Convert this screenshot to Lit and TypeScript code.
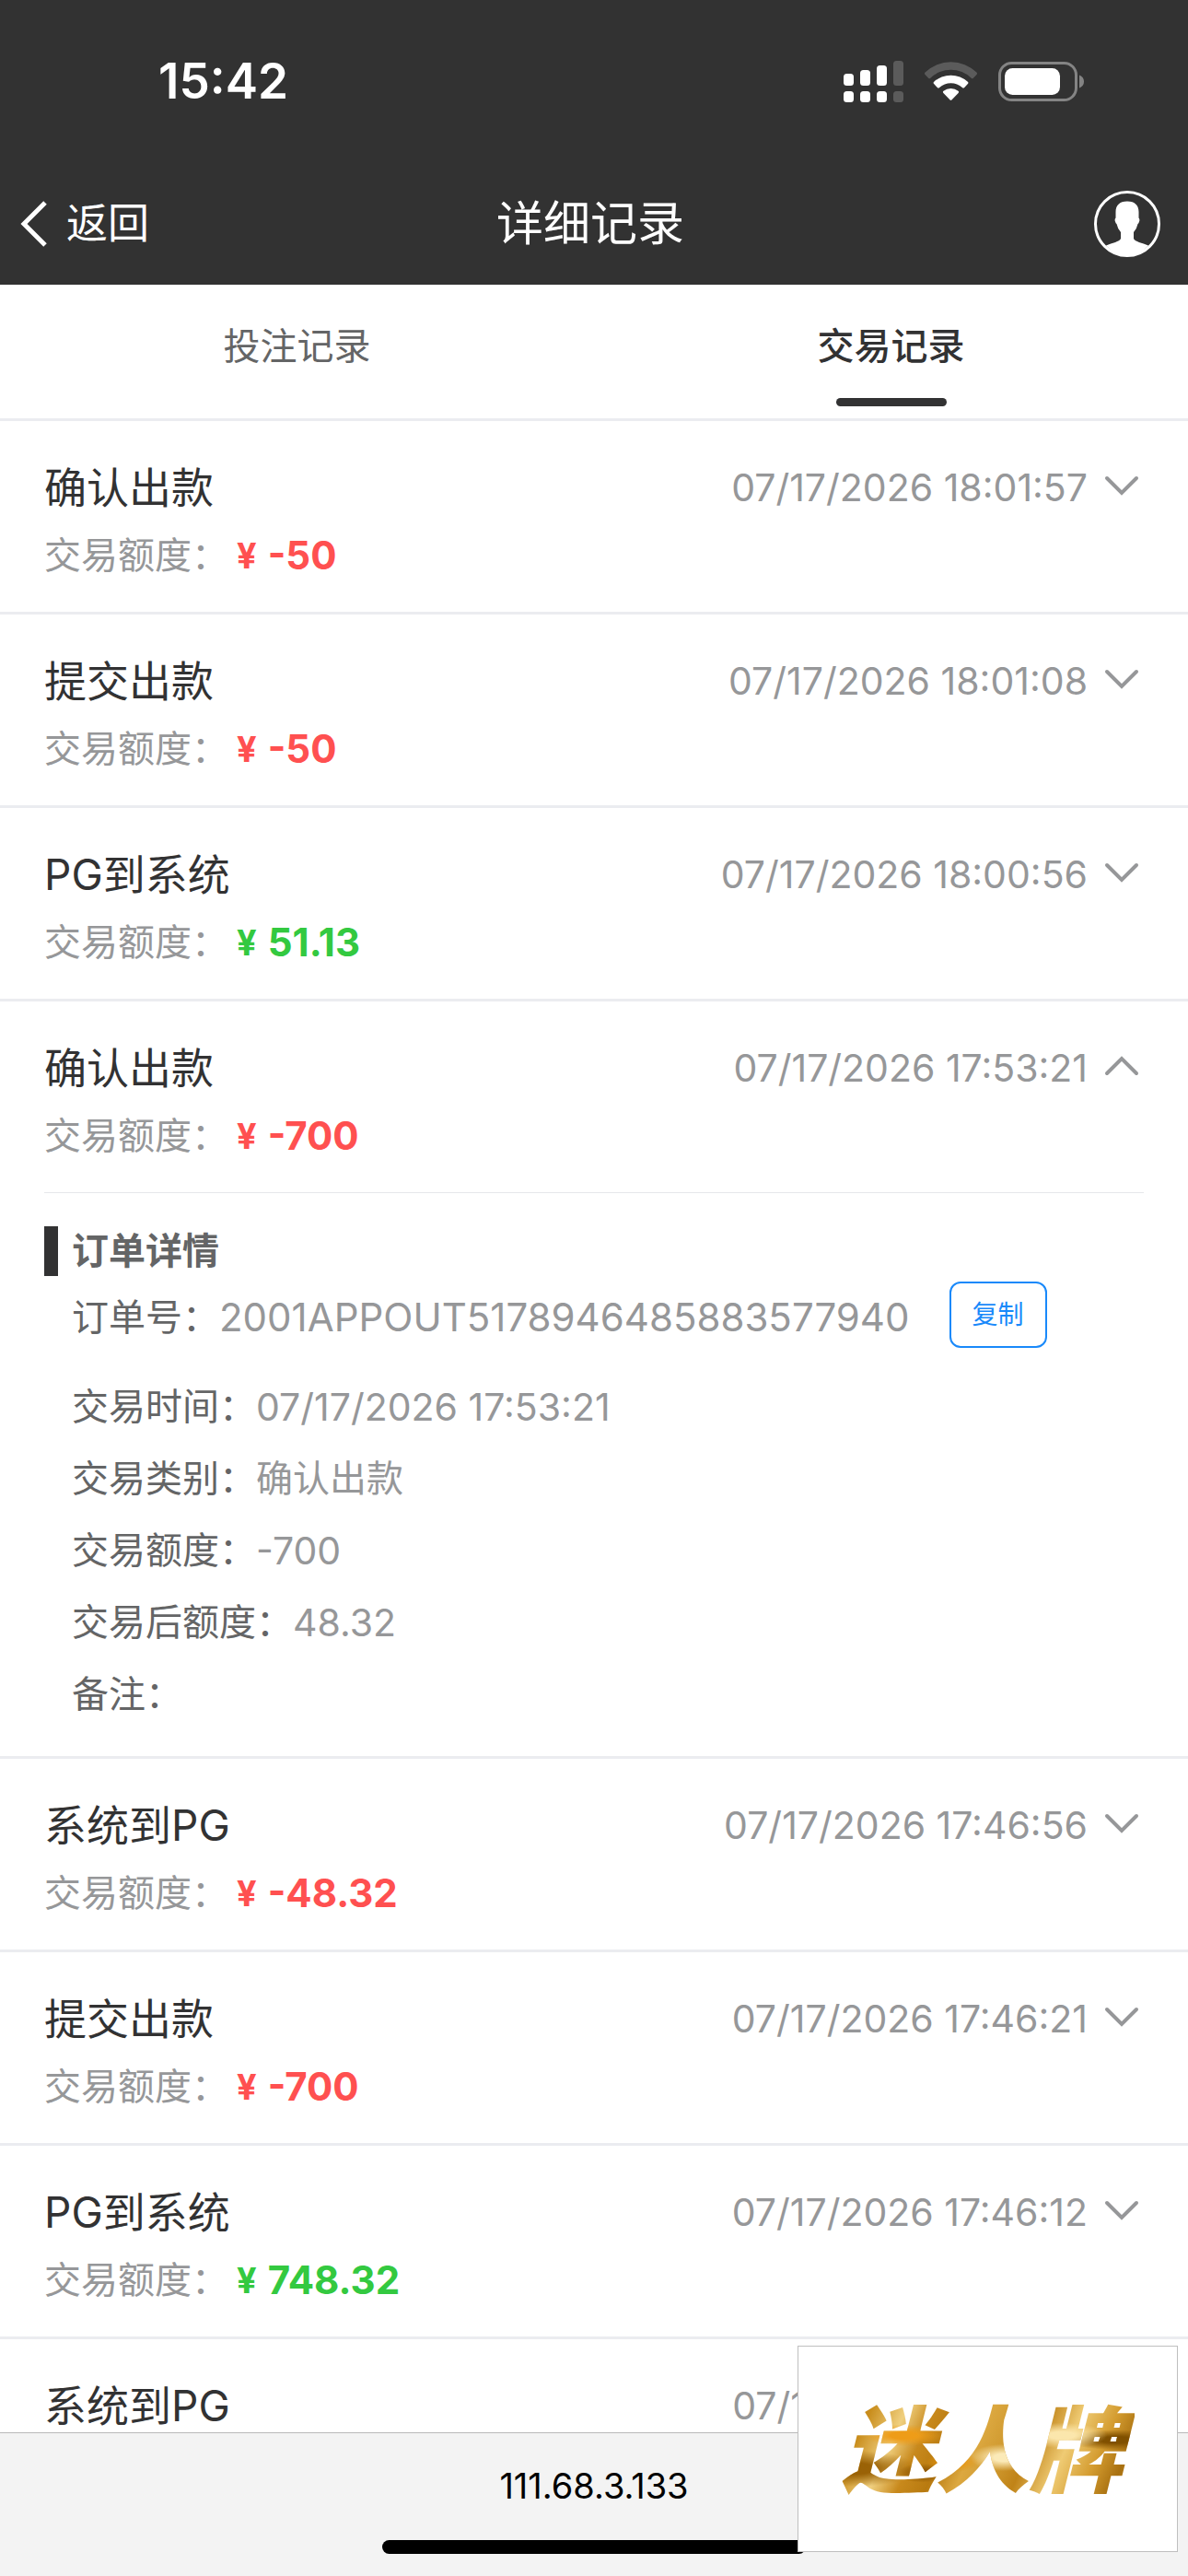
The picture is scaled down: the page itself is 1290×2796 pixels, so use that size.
import {LitElement, css, html, nothing, svg} from 'lit';
import {customElement, property, state} from 'lit/decorators.js';
import {classMap} from 'lit/directives/class-map.js';

interface OrderDetail {
  orderNo: string;
  time: string;
  type: string;
  amount: string;
  balance: string;
  remark: string;
}

interface TradeRecord {
  id: number;
  title: string;
  time: string;
  amount: string;
  detail?: OrderDetail;
}

const TABS = ['投注记录', '交易记录'];

const RECORDS: TradeRecord[] = [
  {id: 1, title: '确认出款', time: '07/17/2026 18:01:57', amount: '-50'},
  {id: 2, title: '提交出款', time: '07/17/2026 18:01:08', amount: '-50'},
  {id: 3, title: 'PG到系统', time: '07/17/2026 18:00:56', amount: '51.13'},
  {
    id: 4,
    title: '确认出款',
    time: '07/17/2026 17:53:21',
    amount: '-700',
    detail: {
      orderNo: '2001APPOUT5178946485883577940',
      time: '07/17/2026 17:53:21',
      type: '确认出款',
      amount: '-700',
      balance: '48.32',
      remark: '',
    },
  },
  {id: 5, title: '系统到PG', time: '07/17/2026 17:46:56', amount: '-48.32'},
  {id: 6, title: '提交出款', time: '07/17/2026 17:46:21', amount: '-700'},
  {id: 7, title: 'PG到系统', time: '07/17/2026 17:46:12', amount: '748.32'},
  {id: 8, title: '系统到PG', time: '07/17/2026 17:45:21', amount: '-748.32'},
];

// height of the upper segment of each signal bar
const SIGNAL = [13, 17, 22, 27];

@customElement('status-bar')
export class StatusBar extends LitElement {
  static styles = css`
    :host {
      display: flex;
      align-items: center;
      justify-content: space-between;
      height: 176px;
      padding: 0 113px 0 172px;
      color: #fff;
    }

    .time {
      font-size: 53px;
      line-height: 60px;
      font-weight: 600;
    }

    .icons {
      display: flex;
      align-items: center;
      gap: 23px;
    }

    svg {
      display: block;
    }
  `;

  render() {
    return html`
      <span class="time">15:42</span>
      <div class="icons">
        <svg width="65" height="45" viewBox="0 0 65 45" fill="#fff">
          ${SIGNAL.map(
            (h, i) => svg`
              <g opacity=${i === 3 ? 0.2 : 1}>
                <rect x=${i * 18} y=${27 - h} width="11" height=${h} rx="3.5" />
                <rect x=${i * 18} y="33" width="11" height="12" rx="3.5" />
              </g>
            `
          )}
        </svg>
        <svg width="57" height="42" viewBox="0 0 57 42" fill="#fff">
          <path
            opacity="0.2"
            d="M.6 11.6a40 40 0 0 1 55.8 0q1.2 1.2.1 2.4l-3.6 3.7q-1.1 1.1-2.2 0a32 32 0 0 0-44.4 0q-1.1 1.1-2.2 0L.5 14q-1.1-1.2.1-2.4z"
          />
          <path
            d="M10.2 21.8a27 27 0 0 1 36.6 0q1.2 1.2.1 2.3l-3.7 3.8q-1.1 1.1-2.3 0a18.5 18.5 0 0 0-24.8 0q-1.2 1.1-2.3 0l-3.7-3.8q-1.1-1.1.1-2.3z"
          />
          <path
            d="M20.5 31.7a13 13 0 0 1 16 0q1.2 1.1.1 2.2l-7 7.3q-1.1 1.1-2.2 0l-7-7.3q-1.1-1.1.1-2.2z"
          />
        </svg>
        <svg width="93" height="43" viewBox="0 0 93 43">
          <rect x="1.5" y="1.5" width="83" height="40" rx="13" fill="none" stroke="#848484" stroke-width="3" />
          <rect x="7" y="7" width="60" height="29" rx="8.5" fill="#fff" />
          <path d="M88 14.5q5 2 5 7t-5 7z" fill="#848484" />
        </svg>
      </div>
    `;
  }
}

@customElement('trade-record')
export class TradeRecordItem extends LitElement {
  @property({attribute: false}) record!: TradeRecord;
  @property({type: Boolean}) open = false;

  static styles = css`
    :host {
      display: block;
      border-top: 3px solid #ebecf0;
    }

    button {
      font: inherit;
      background: none;
      cursor: pointer;
    }

    .summary {
      display: grid;
      grid-template-columns: 1fr auto 48px;
      align-items: center;
      row-gap: 17px;
      width: 100%;
      padding: 42px 48px 34px;
      border: none;
      text-align: left;
    }

    .title {
      font-size: 46px;
      line-height: 60px;
      color: #323233;
    }

    .time {
      margin-right: 13px;
      font-size: 41px;
      line-height: 60px;
      color: #969799;
    }

    .arrow {
      display: block;
      margin-bottom: 4px;
    }

    .amount {
      grid-column: 1 / -1;
      display: flex;
      align-items: center;
      height: 54px;
      font-size: 40px;
      line-height: 54px;
      color: #969799;
    }

    .money {
      display: flex;
      align-items: center;
      gap: 12px;
      margin-left: 9px;
      font-size: 42px;
      font-weight: 700;
      color: #33c940;
    }

    .money.out {
      color: #ff5050;
    }

    .currency {
      font-size: 38px;
    }

    .detail {
      margin: 0 48px;
      padding: 36px 0 28px;
      border-top: 1px solid #e6e7ea;
    }

    h3 {
      display: flex;
      gap: 15px;
      margin: 0 0 6px;
      font-size: 40px;
      line-height: 54px;
      font-weight: 700;
      color: #646566;
    }

    h3::before {
      content: '';
      width: 15px;
      background: #323233;
    }

    dl {
      margin: 0;
      padding-left: 30px;
    }

    .line {
      display: flex;
      height: 78px;
      font-size: 40px;
      line-height: 78px;
    }

    .line:first-child {
      margin-bottom: 19px;
    }

    dt {
      color: #646566;
    }

    dd {
      display: flex;
      margin: 0;
      color: #969799;
    }

    .number {
      font-size: 41px;
    }

    .order-no {
      font-size: 42px;
    }

    .copy {
      height: 72px;
      margin-left: 43px;
      padding: 0 23px;
      border: 2px solid #1989fa;
      border-radius: 12px;
      font-size: 28px;
      line-height: 68px;
      color: #1989fa;
    }
  `;

  _toggle() {
    this.dispatchEvent(
      new CustomEvent('record-toggle', {
        detail: {id: this.record.id},
      })
    );
  }

  _copy(text: string) {
    navigator.clipboard?.writeText(text);
  }

  _renderDetail(detail: OrderDetail) {
    return html`
      <div class="detail">
        <h3>订单详情</h3>
        <dl>
          <div class="line">
            <dt>订单号：</dt>
            <dd class="order-no">
              ${detail.orderNo}
              <button class="copy" @click=${() => this._copy(detail.orderNo)}>复制</button>
            </dd>
          </div>
          <div class="line">
            <dt>交易时间：</dt>
            <dd class="number">${detail.time}</dd>
          </div>
          <div class="line">
            <dt>交易类别：</dt>
            <dd>${detail.type}</dd>
          </div>
          <div class="line">
            <dt>交易额度：</dt>
            <dd class="number">${detail.amount}</dd>
          </div>
          <div class="line">
            <dt>交易后额度：</dt>
            <dd class="number">${detail.balance}</dd>
          </div>
          <div class="line">
            <dt>备注：</dt>
            <dd>${detail.remark}</dd>
          </div>
        </dl>
      </div>
    `;
  }

  render() {
    const {title, time, amount, detail} = this.record;
    return html`
      <button class="summary" aria-expanded=${this.open} @click=${this._toggle}>
        <span class="title">${title}</span>
        <span class="time">${time}</span>
        <svg class="arrow" width="48" height="48" viewBox="0 0 48 48" fill="none" stroke="#969799" stroke-width="4" stroke-linecap="round">
          <path d=${this.open ? 'M8 32L24 16L40 32' : 'M8 16L24 32L40 16'} />
        </svg>
        <span class="amount">
          交易额度：
          <span class=${classMap({money: true, out: amount.startsWith('-')})}>
            <span class="currency">¥</span>
            <span>${amount}</span>
          </span>
        </span>
      </button>
      ${this.open && detail ? this._renderDetail(detail) : nothing}
    `;
  }
}

@customElement('app-root')
export class AppRoot extends LitElement {
  @state() activeTab = 1;
  @state() openId = 4;

  static styles = css`
    :host {
      display: flex;
      flex-direction: column;
      height: 100vh;
      background: #fff;
      font-family: Inter, 'Noto Sans CJK SC', sans-serif;
    }

    button {
      font: inherit;
      background: none;
      border: none;
      cursor: pointer;
    }

    header {
      background: #323232;
      color: #fff;
    }

    .nav {
      display: grid;
      grid-template-columns: 1fr auto 1fr;
      align-items: center;
      height: 133px;
      padding: 0 30px 0 22px;
    }

    .nav h1 {
      margin: 0;
      font-size: 51px;
      line-height: 60px;
      font-weight: 400;
    }

    .back {
      display: flex;
      align-items: center;
      justify-self: start;
      gap: 20px;
      padding: 0;
      font-size: 45px;
      line-height: 60px;
      color: inherit;
    }

    .avatar {
      justify-self: end;
      padding: 0;
    }

    svg {
      display: block;
    }

    .tabs {
      display: grid;
      grid-template-columns: 1fr 1fr;
    }

    .tab {
      display: flex;
      flex-direction: column;
      align-items: center;
      gap: 26px;
      padding: 37px 0 13px;
      font-size: 40px;
      line-height: 60px;
      color: #646566;
    }

    .tab::after {
      content: '';
      width: 120px;
      height: 9px;
      border-radius: 5px;
    }

    .tab.active {
      font-weight: 500;
      color: #323233;
    }

    .tab.active::after {
      background: #323233;
    }

    main {
      flex: 1;
      min-height: 0;
      overflow-y: auto;
      scrollbar-width: none;
    }

    footer {
      display: flex;
      flex-direction: column;
      align-items: center;
      gap: 35px;
      padding: 33px 0 24px;
      border-top: 1px solid #b9b9b9;
      background: #f3f3f3;
    }

    .address {
      font-size: 38px;
      line-height: 48px;
      color: #000;
    }

    .home {
      width: 460px;
      height: 15px;
      border-radius: 8px;
      background: #000;
    }

    /* floating brand tile, sits over the list and the browser bar */
    .brand {
      position: fixed;
      right: 11px;
      bottom: 26px;
      display: flex;
      align-items: center;
      justify-content: center;
      box-sizing: border-box;
      width: 413px;
      height: 224px;
      padding: 0 12px 10px 0;
      border: 1px solid #bfbfbf;
      background: #fff;
    }

    .brand span {
      padding: 0 12px;
      font-family: 'Noto Sans CJK SC', sans-serif;
      font-size: 102px;
      line-height: 120px;
      font-weight: 900;
      font-style: italic;
      color: transparent;
      background:
        radial-gradient(ellipse at 24% 42%, #ee9c18 0 4%, transparent 12%),
        radial-gradient(ellipse at 40% 66%, #e8950f 0 3%, transparent 10%),
        radial-gradient(ellipse at 57% 62%, #fbeab8 0 4%, transparent 14%),
        radial-gradient(ellipse at 76% 42%, #fbe6ac 0 4%, transparent 14%),
        radial-gradient(ellipse at 94% 46%, #805000 0 4%, transparent 12%),
        radial-gradient(ellipse at 8% 72%, #9a6206 0 5%, transparent 16%),
        radial-gradient(ellipse at 30% 76%, #8a5404 0 2%, transparent 8%),
        linear-gradient(115deg, #b87a10 0%, #c98d1c 14%, #f0d080 24%, #c8891c 32%, #b87a10 40%, #dca840 48%, #d09a30 56%, #c08318 64%, #efcb74 74%, #d49c30 84%, #a87010 92%, #d6a03a 100%);
      background-clip: text;
      -webkit-background-clip: text;
    }
  `;

  _handleToggle(e: CustomEvent) {
    this.openId = this.openId === e.detail.id ? 0 : e.detail.id;
  }

  render() {
    return html`
      <header>
        <status-bar></status-bar>
        <div class="nav">
          <button class="back">
            <svg width="30" height="50" viewBox="0 0 30 50" fill="none" stroke="#fff" stroke-width="5">
              <path d="M27 2L4 25L27 48" />
            </svg>
            返回
          </button>
          <h1>详细记录</h1>
          <button class="avatar" aria-label="我的">
            <svg width="72" height="72" viewBox="0 0 72 72">
              <circle cx="36" cy="36" r="34.5" fill="none" stroke="#fff" stroke-width="3" />
              <path
                fill="#fff"
                d="M36 11.5c8.5 0 12.5 4.5 12.5 11.5v6.5q1.5 1.5.5 4-.5 2-1.5 2.5-1 5-4.5 9v7c1.5 3.5 9 4.5 16 7.5A34 34 0 0 1 36 71 34 34 0 0 1 13 59.5c7-3 14.5-4 16-7.5v-7q-3.5-4-4.5-9-1-.5-1.5-2.5-1-2.5.5-4V23c0-7 4-11.5 12.5-11.5z"
              />
            </svg>
          </button>
        </div>
      </header>
      <div class="tabs" role="tablist">
        ${TABS.map(
          (tab, i) => html`
            <button
              role="tab"
              class=${classMap({tab: true, active: this.activeTab === i})}
              aria-selected=${this.activeTab === i}
              @click=${() => (this.activeTab = i)}
            >
              ${tab}
            </button>
          `
        )}
      </div>
      <main>
        ${RECORDS.map(
          (record) => html`
            <trade-record
              .record=${record}
              ?open=${this.openId === record.id}
              @record-toggle=${this._handleToggle}
            ></trade-record>
          `
        )}
      </main>
      <footer>
        <span class="address">111.68.3.133</span>
        <div class="home"></div>
      </footer>
      <div class="brand"><span>迷人牌</span></div>
    `;
  }
}
